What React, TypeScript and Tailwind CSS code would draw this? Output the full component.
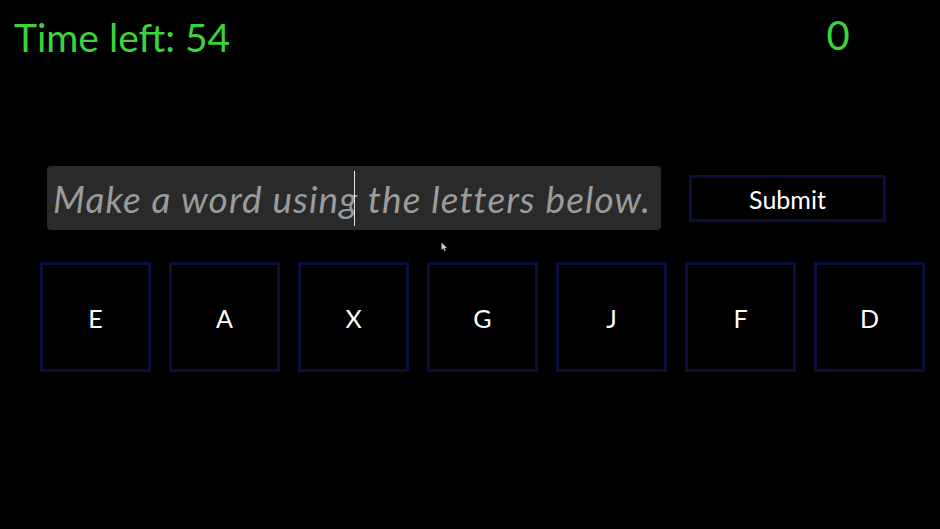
import { useState } from "react";

const letters = ["E", "A", "X", "G", "J", "F", "D"];

export default function App() {
  const [word, setWord] = useState("");
  const timeLeft = 54;
  const score = 0;

  return (
    <div
      className="w-[940px] h-[529px] bg-black flex flex-col overflow-hidden"
      style={{ fontFamily: "Lato, 'Noto Sans', sans-serif" }}
    >
      {/* Header */}
      <div className="flex items-start justify-between h-[166px]">
        <div className="pl-[14px] pt-[12px] text-[39px] leading-[50px] text-[#3cd43c]">
          Time left: {timeLeft}
        </div>
        <div className="w-[60px] mr-[72px] pt-[10px] text-center text-[40px] leading-[50px] text-[#3cd43c]">
          {score}
        </div>
      </div>

      {/* Input row */}
      <div className="flex items-center pl-[47px] gap-[28px]">
        <div className="relative">
          <input
            value={word}
            onChange={(e) => setWord(e.target.value)}
            placeholder="Make a word using the letters below."
            className="w-[614px] h-[64px] rounded-[4px] bg-[#2a2a2a] pl-[6px] text-[37px] tracking-[1.1px] text-white outline-none placeholder:italic placeholder:text-[#9b9b9b]"
          />
          <span className="absolute left-[307px] top-[5px] w-px h-[55px] bg-[#e5e5e5]" />
          <svg
            className="absolute left-[394px] top-[76px]"
            width="7"
            height="10"
            viewBox="0 0 7 10"
          >
            <path d="M0.5 0.5 L0.5 8 L2.3 6.3 L3.6 9.3 L4.8 8.8 L3.6 5.9 L6 5.9 Z" fill="#cfcfcf" />
          </svg>
        </div>
        <button className="w-[197px] h-[47px] border-[3px] border-[#0a0e40] bg-black pt-[3px] text-white text-[25px] leading-none">
          Submit
        </button>
      </div>

      {/* Letter tiles */}
      <div className="flex pl-[40px] gap-[18px] mt-[32px]">
        {letters.map((l) => (
          <div
            key={l}
            className="w-[111px] h-[110px] border-[3px] border-[#0a0e3a] flex items-center justify-center pt-[4px] text-white text-[25px]"
          >
            {l}
          </div>
        ))}
      </div>
    </div>
  );
}
